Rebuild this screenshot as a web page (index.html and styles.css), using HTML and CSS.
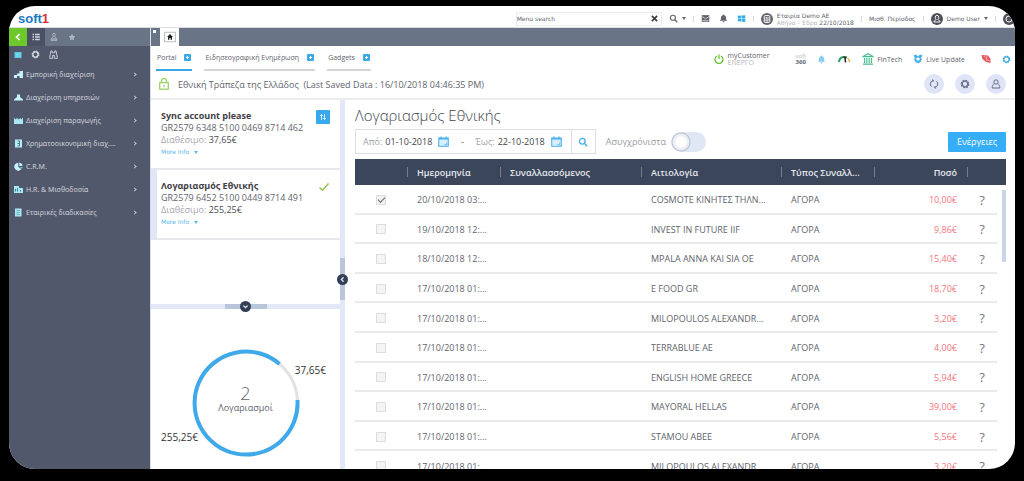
FILE: index.html
```html
<!DOCTYPE html>
<html lang="el">
<head>
<meta charset="utf-8">
<meta name="viewport" content="width=device-width, initial-scale=1">
<title>Soft1 Portal</title>
<link rel="stylesheet" href="styles.css">
</head>
<body>
<svg class="sprite" aria-hidden="true">
  <symbol id="i-search" viewBox="0 0 12 12"><circle cx="5.2" cy="5" r="3.4" fill="none" stroke="currentColor" stroke-width="1.5"/><path d="M7.7 7.6 11 11" stroke="currentColor" stroke-width="1.7"/></symbol>
  <symbol id="i-bell" viewBox="0 0 12 12"><path d="M6 .8a1 1 0 0 1 1 1C9 2.3 9.4 4 9.4 6c0 1.6.7 2.2 1.6 3H1c.9-.8 1.6-1.400 1.600-3C2.600 4 3 2.300 5 1.800a1 1 0 0 1 1-1zM4.600 9.800h2.800a1.400 1.400 0 0 1-2.800 0z" fill="currentColor"/></symbol>
  <symbol id="i-gear" viewBox="0 0 12 12"><circle cx="6" cy="6" r="4.300" fill="none" stroke="currentColor" stroke-width="1.800" stroke-dasharray="2 1.377"/><circle cx="6" cy="6" r="3.400" fill="none" stroke="currentColor" stroke-width="1.600"/></symbol>
  <symbol id="i-user" viewBox="0 0 12 12"><circle cx="6" cy="3.600" r="2.600" fill="none" stroke="currentColor" stroke-width="1.200"/><path d="M4 5.500C2.300 6.500 1.500 8 1.400 10.800h9.200C10.500 8 9.700 6.500 8 5.500" fill="none" stroke="currentColor" stroke-width="1.200"/></symbol>
  <symbol id="i-cal" viewBox="0 0 12 12"><path d="M.8 2.200h10.400v9H.8z" fill="#d8effc" stroke="currentColor" stroke-width="1.100"/><path d="M.8 3.200h10.400M3.300.5v2.500M8.700.5v2.500" stroke="currentColor" stroke-width="1.300"/><path d="M7 9.400h2.500V7" stroke="currentColor" fill="none" stroke-width=".8"/></symbol>
</svg>
<div class="frame">
  <header class="topbar">
    <a class="logo" href="#" aria-label="soft1">soft<span class="logo-one">1</span></a>
    <div class="top-tools">
      <div class="menu-search">
        <input type="text" class="menu-input" value="Menu search" aria-label="Menu search">
        <button class="bare dark" aria-label="Clear"><svg class="ic6" viewBox="0 0 8 8"><path d="M1 1l6 6M7 1 1 7" stroke="currentColor" stroke-width="1.800"/></svg></button>
      </div>
      <button class="bare find" aria-label="Search"><svg class="ic9"><use href="#i-search"/></svg><svg class="caret" viewBox="0 0 4 3"><path d="M0 0h4L2 3z" fill="currentColor"/></svg></button>
      <span class="sep"></span>
      <div class="notices">
        <button class="bare" aria-label="Messages"><svg class="ic9" viewBox="0 0 12 12"><rect x="1" y="1.500" width="10" height="9" fill="currentColor"/><path d="M1.500 3.500 6 6.500l4.500-3M2 9h8" stroke="#fff" stroke-width=".9" fill="none"/></svg></button>
        <button class="bare" aria-label="Notifications"><svg class="ic9"><use href="#i-bell"/></svg></button>
        <button class="bare cyan" aria-label="Windows"><svg class="ic9" viewBox="0 0 12 12"><path d="M1 2.400 5.500 2v3.700H1zM6.200 2 11 1.500v4.200H6.200zM1 6.400h4.500V10L1 9.600zM6.200 6.400H11v4.200l-4.800-.5z" fill="currentColor"/></svg></button>
      </div>
      <span class="sep"></span>
      <div class="company">
        <svg class="ic12" viewBox="0 0 12 12"><circle cx="6" cy="6" r="6" fill="#62646b"/><rect x="3.200" y="2.600" width="5.600" height="6.800" rx="1" fill="none" stroke="#fff" stroke-width="1"/><path d="M4 4.700h4M4 6.200h4M4 7.700h4M5.300 4v5M6.800 4v5" stroke="#fff" stroke-width=".5"/></svg>
        <div class="company-text"><span>Εταιρία Demo AE</span><span class="muted">Αθήνα - Έδρα <b class="date">22/10/2018</b></span></div>
      </div>
      <span class="sep"></span>
      <a class="period" href="#">Μισθ. Περίοδος</a>
      <span class="sep"></span>
      <a class="account" href="#"><svg class="ic12" viewBox="0 0 12 12"><circle cx="6" cy="6" r="6" fill="#50525c"/><path d="M6 2.300c2.200 0 2.200 3.300.8 4.200.4.700 2.300.7 2.300 2.500H2.900c0-1.800 1.900-1.800 2.300-2.500C3.800 5.600 3.800 2.300 6 2.300z" fill="none" stroke="#fff" stroke-width=".9"/></svg>Demo User<svg class="caret" viewBox="0 0 4 3"><path d="M0 0h4L2 3z" fill="currentColor"/></svg></a>
      <span class="sep"></span>
      <button class="bare" aria-label="Help"><svg class="ic12" viewBox="0 0 12 12"><circle cx="6" cy="6" r="6" fill="#50525c"/><circle cx="6" cy="6" r="3" fill="none" stroke="#fff"/></svg></button>
    </div>
  </header>
  <div class="body">
    <aside class="sidebar">
      <div class="side-modes">
        <button class="mode back" aria-label="Back"><svg class="ic8" viewBox="0 0 8 8"><path d="M5.500 1 2.500 4l3 3" fill="none" stroke="#fff" stroke-width="1.700"/></svg></button>
        <button class="mode current" aria-label="List"><svg class="ic8" viewBox="0 0 8 8"><path d="M.5 1.500h1.500M.5 4h1.500M.5 6.500h1.500M3 1.500h4.800M3 4h4.800M3 6.500h4.800" stroke="#cfd3dc" stroke-width="1.300"/></svg></button>
        <button class="mode" aria-label="Users"><svg class="ic8" viewBox="0 0 8 8"><path d="M4 .3c1.500 0 1.500 2.500.5 3 .5 1 2.500 1.500 2.500 4H1c0-2.500 2-3 2.500-4-1-.5-1-3 .5-3z" fill="none" stroke="#bcc1cc" stroke-width=".9"/><path d="M2 6h4" stroke="#bcc1cc"/></svg></button>
        <button class="mode" aria-label="Favourites"><svg class="ic8" viewBox="0 0 8 8"><path d="m4 .8 1 2 2.300.5L5.700 5 6 7.300 4 6.200 2 7.300 2.300 5 .7 3.300 3 2.800z" fill="#b0b6c2"/></svg></button>
      </div>
      <div class="side-tools">
        <button class="bare" aria-label="Apps"><svg class="ic8" viewBox="0 0 8 8"><rect x=".5" y="1" width="7" height="6" fill="#5ccbe5"/><path d="M1.500 3h5M1.500 5h5" stroke="#8be3f4" stroke-width=".8"/></svg></button>
        <button class="bare pale" aria-label="Settings"><svg class="ic9"><use href="#i-gear"/></svg></button>
        <button class="bare pale" aria-label="Find"><svg class="ic9" viewBox="0 0 10 10"><path d="M2.200 1h1.300v2h3V1h1.300l1.400 7v1.300H6V6H4v3.300H.8V8z" fill="none" stroke="currentColor" stroke-width="1"/></svg></button>
      </div>
      <nav class="menu">
        <a href="#"><svg class="ic9" viewBox="0 0 9 9"><path d="M0 5h3V3.500h2.500V1H9v7H5.500V6H3v2H0z" fill="#c8f2fa"/></svg><span>Εμπορική διαχείριση</span><i class="chev"></i></a>
        <a href="#"><svg class="ic9" viewBox="0 0 9 9"><path d="M3 1.500h3V4l3 2.500v1H0v-1L3 4z" fill="#c8f2fa"/></svg><span>Διαχείριση υπηρεσιών</span><i class="chev"></i></a>
        <a href="#"><svg class="ic9" viewBox="0 0 9 9"><path d="M0 1.500 1.500 3.500 3 2l1.500 1.500L6.500 2l1 1.500L9 1.500V8H0z" fill="#a9e7f3"/></svg><span>Διαχείριση παραγωγής</span><i class="chev"></i></a>
        <a href="#"><svg class="ic9" viewBox="0 0 9 9"><rect x="1" y=".5" width="7" height="8" fill="#b9edf6"/><path d="M3.500 2h2v5h-2M3.500 4.500h2" stroke="#56798a" fill="none"/></svg><span>Χρηματοοικονομική διαχ....</span><i class="chev"></i></a>
        <a href="#"><svg class="ic9" viewBox="0 0 9 9"><path d="M4.300.7v4l3 2.600A4 4 0 1 1 4.300.7z" fill="#c8f2fa"/><path d="M5.300.5a4 4 0 0 1 3.200 3.600H5.300z" fill="#c8f2fa"/><path d="m6 5h2.600c0 .8-.3 1.400-.7 1.900z" fill="#5ccbe5"/></svg><span>C.R.M.</span><i class="chev"></i></a>
        <a href="#"><svg class="ic9" viewBox="0 0 9 9"><path d="M0 1h5v2h4v5H0z" fill="#a9e7f3"/><path d="M1.500 6.500V4M3.500 6.500V3M6.500 6.500V5" stroke="#3e7c92"/></svg><span>H.R. &amp; Μισθοδοσία</span><i class="chev"></i></a>
        <a href="#"><svg class="ic9" viewBox="0 0 9 9"><rect x="1" y=".5" width="6.500" height="8" fill="#a9e7f3"/><path d="M2.500 2.500h3.500M2.500 4.500h3.500M2.500 6.500h3.500" stroke="#5a9fb2" stroke-width=".8"/></svg><span>Εταιρικές διαδικασίες</span><i class="chev"></i></a>
      </nav>
    </aside>
    <main class="main">
      <div class="windowbar"><i class="dot"></i><a class="home" href="#" aria-label="Home"><svg class="ic12" viewBox="0 0 12 12"><rect x=".7" y="1.200" width="10.600" height="9.600" fill="#fff" stroke="#a7abb4" stroke-width=".8"/><path d="M6 3 9 6H8v2.800H6.600V7H5.400v1.800H4V6H3z" fill="#222"/></svg></a></div>
      <div class="portal-row">
        <nav class="tabs">
          <a class="tab on" href="#">Portal<i class="plus"></i></a>
          <a class="tab" href="#">Ειδησεογραφική Ενημέρωση<i class="plus"></i></a>
          <a class="tab" href="#">Gadgets<i class="plus"></i></a>
        </nav>
        <div class="apps">
          <a class="customer" href="#"><svg class="ic10" viewBox="0 0 10 10"><path d="M3 2a4 4 0 1 0 4 0M5 .5V5" fill="none" stroke="#6dc233" stroke-width="1.300"/></svg><span class="customer-text"><span>myCustomer</span><span class="muted">ΕΝΕΡΓΟ</span></span></a>
          <a class="soft360" href="#"><span class="muted">soft</span><b>360</b></a>
          <a href="#" aria-label="Alerts"><svg class="ic9 sky"><use href="#i-bell"/></svg></a>
          <a href="#" aria-label="Dashboard"><svg class="gauge" viewBox="0 0 14 10"><path d="M2 8a5.500 5.500 0 0 1 4-5" fill="none" stroke="#27a567" stroke-width="2"/><path d="M6 3a5.500 5.500 0 0 1 3.800.6" fill="none" stroke="#35674f" stroke-width="2"/><path d="M10.500 4A5.500 5.500 0 0 1 12.500 8" fill="none" stroke="#d8bb68" stroke-width="1.600"/><path d="M8.500 8.500 8 3" stroke="#222" stroke-width="1.500"/></svg></a>
          <a class="app-link" href="#"><svg class="ic12" viewBox="0 0 12 12"><path d="M.5 3.700 6 .7l5.500 3zM1 11.200h10" fill="none" stroke="#45bd91" stroke-width="1.200"/><path d="M2.500 5v5M4.800 5v5M7.200 5v5M9.500 5v5" stroke="#45bd91" stroke-width="1.200"/></svg>FinTech</a>
          <a class="app-link live" href="#"><svg class="ic10" viewBox="0 0 10 10"><path d="M.5 1.500 3 .5l2 2 2-2 2.500 1L8 4l1 1.500-1.500 2.500L5 9.500 2.500 8 1 5.500 2 4z" fill="#46b1ea"/><path d="M5 3.200 7.200 5 5 7 2.800 5z" fill="#fff"/></svg>Live Update</a>
          <a href="#" aria-label="Alert"><svg class="ic10" viewBox="0 0 10 10"><path d="M.5 1 7 1.500 9.500 5v4L5 8 1.500 5z" fill="#e4575b"/><path d="m3 2 5 5M6 2l-1 4 4 1" stroke="#f7c5c5" stroke-width=".6" fill="none"/></svg></a>
          <a href="#" aria-label="Settings"><svg class="ic9 azure"><use href="#i-gear"/></svg></a>
        </div>
      </div>
      <div class="bank-row">
        <svg class="lock" viewBox="0 0 10 12"><rect x=".7" y="4.700" width="8.600" height="6.500" fill="none" stroke="#93cf5b" stroke-width="1.200"/><path d="M2.500 4.500V3a2.500 2.500 0 0 1 5 0v1.500M5 7v2.200" fill="none" stroke="#93cf5b" stroke-width="1.200"/></svg>
        <h1 class="bank">Εθνική Τράπεζα της Ελλάδος&nbsp; (Last Saved Data : 16/10/2018 04:46:35 PM)</h1>
        <div class="round-tools">
          <button class="round" aria-label="Refresh"><svg class="ic10" viewBox="0 0 12 12"><path d="M3 9.200A4.300 4.300 0 0 1 5 1.800M9 2.800a4.300 4.300 0 0 1-2 7.400M3.800.8 5.500 1.800 4.500 3.500M8.200 11.200 6.500 10.200 7.500 8.500" fill="none" stroke="currentColor" stroke-width="1.200"/></svg></button>
          <button class="round" aria-label="Settings"><svg class="ic10"><use href="#i-gear"/></svg></button>
          <button class="round" aria-label="Profile"><svg class="ic10"><use href="#i-user"/></svg></button>
        </div>
      </div>
      <div class="workspace">
        <section class="accounts">
          <div class="account-list">
            <article class="card">
              <div><h2>Sync account please</h2><p>GR2579 6348 5100 0469 8714 462</p><p><span class="label">Διαθέσιμο:</span> <span class="strong">37,65€</span></p><a class="more" href="#">More Info<svg class="caret" viewBox="0 0 4 3"><path d="M0 0h4L2 3z" fill="currentColor"/></svg></a></div>
              <button class="sync" aria-label="Sync"><svg class="ic8" viewBox="0 0 8 8"><path d="M2.500 7V1.500M1 3l1.500-1.500L4 3M5.500 1v5.500M4 5l1.500 1.500L7 5" fill="none" stroke="#fff" stroke-width=".8"/></svg></button>
            </article>
            <article class="card chosen">
              <div><h2>Λογαριασμός Εθνικής</h2><p>GR2579 6452 5100 0449 8714 491</p><p><span class="label">Διαθέσιμο:</span> <span class="strong">255,25€</span></p><a class="more" href="#">More Info<svg class="caret" viewBox="0 0 4 3"><path d="M0 0h4L2 3z" fill="currentColor"/></svg></a></div>
              <svg class="tick" viewBox="0 0 12 10"><path d="M1.500 5.500 4.500 8.300 10.500 1.500" fill="none" stroke="#8fc34a" stroke-width="1.400"/></svg>
            </article>
          </div>
          <div class="split-h"><span class="grip-h"><button class="knob" aria-label="Collapse"><svg class="ic6" viewBox="0 0 8 8"><path d="m1.500 3 2.500 2.200L6.500 3" fill="none" stroke="#dde3ee" stroke-width="1.500"/></svg></button></span></div>
          <figure class="donut">
            <svg class="ring" viewBox="0 0 110 110" role="img" aria-label="37,65€ / 255,25€"><circle cx="55" cy="55" r="51.500" fill="none" stroke="#e3e1e3" stroke-width="3"/><path d="M106.500 52A51.500 51.500 0 1 1 88.500 15.900" fill="none" stroke="#40a9ea" stroke-width="4"/></svg>
            <figcaption class="donut-text"><span class="count">2</span><span>Λογαριασμοί</span></figcaption>
            <span class="slice small-slice">37,65€</span>
            <span class="slice large-slice">255,25€</span>
          </figure>
        </section>
        <div class="split-v"><span class="grip-v"><button class="knob" aria-label="Collapse"><svg class="ic6" viewBox="0 0 8 8"><path d="M5.200 1.500 2.800 4l2.400 2.500" fill="none" stroke="#dde3ee" stroke-width="1.500"/></svg></button></span></div>
        <section class="ledger">
          <h2 class="ledger-title">Λογαριασμός Εθνικής</h2>
          <div class="filters">
            <div class="range">
              <label class="date-field"><span>Από:</span><input type="text" value="01-10-2018"></label><svg class="cal azure"><use href="#i-cal"/></svg>
              <span class="dash">-</span>
              <label class="date-field"><span>Έως:</span><input type="text" value="22-10-2018"></label><svg class="cal azure"><use href="#i-cal"/></svg>
              <button class="range-go" aria-label="Search"><svg class="ic10"><use href="#i-search"/></svg></button>
            </div>
            <label class="unsynced">Ασυγχρόνιστα<input type="checkbox" class="switch"></label>
            <button class="actions">Ενέργειες</button>
          </div>
          <div class="grid">
            <table>
              <colgroup><col class="c-check"><col class="c-std"><col class="c-party"><col><col class="c-std"><col class="c-std"><col class="c-help"><col class="c-gutter"></colgroup>
              <thead><tr><th></th><th>Ημερομηνία</th><th>Συναλλασσόμενος</th><th>Αιτιολογία</th><th>Τύπος Συναλλ...</th><th class="num">Ποσό</th><th></th><th></th></tr></thead>
              <tbody>
                <tr><td><input type="checkbox" aria-label="COSMOTE" checked></td><td>20/10/2018 03:...</td><td></td><td>COSMOTE ΚΙΝΗΤΕΣ ΤΗΛΝ...</td><td>ΑΓΟΡΑ</td><td class="num">10,00€</td><td class="q">?</td><td></td></tr>
                <tr><td><input type="checkbox" aria-label="INVEST IN FUTURE"></td><td>19/10/2018 12:...</td><td></td><td>INVEST IN FUTURE IIF</td><td>ΑΓΟΡΑ</td><td class="num">9,86€</td><td class="q">?</td><td></td></tr>
                <tr><td><input type="checkbox" aria-label="MPALA ANNA"></td><td>18/10/2018 12:...</td><td></td><td>MPALA ANNA KAI SIA OE</td><td>ΑΓΟΡΑ</td><td class="num">15,40€</td><td class="q">?</td><td></td></tr>
                <tr><td><input type="checkbox" aria-label="E FOOD"></td><td>17/10/2018 01:...</td><td></td><td>E FOOD GR</td><td>ΑΓΟΡΑ</td><td class="num">18,70€</td><td class="q">?</td><td></td></tr>
                <tr><td><input type="checkbox" aria-label="MILOPOULOS"></td><td>17/10/2018 01:...</td><td></td><td>MILOPOULOS ALEXANDR...</td><td>ΑΓΟΡΑ</td><td class="num">3,20€</td><td class="q">?</td><td></td></tr>
                <tr><td><input type="checkbox" aria-label="TERRABLUE"></td><td>17/10/2018 01:...</td><td></td><td>TERRABLUE AE</td><td>ΑΓΟΡΑ</td><td class="num">4,00€</td><td class="q">?</td><td></td></tr>
                <tr><td><input type="checkbox" aria-label="ENGLISH HOME"></td><td>17/10/2018 01:...</td><td></td><td>ENGLISH HOME GREECE</td><td>ΑΓΟΡΑ</td><td class="num">5,94€</td><td class="q">?</td><td></td></tr>
                <tr><td><input type="checkbox" aria-label="MAYORAL"></td><td>17/10/2018 01:...</td><td></td><td>MAYORAL HELLAS</td><td>ΑΓΟΡΑ</td><td class="num">39,00€</td><td class="q">?</td><td></td></tr>
                <tr><td><input type="checkbox" aria-label="STAMOU"></td><td>17/10/2018 01:...</td><td></td><td>STAMOU ABEE</td><td>ΑΓΟΡΑ</td><td class="num">5,56€</td><td class="q">?</td><td></td></tr>
                <tr><td><input type="checkbox" aria-label="MILOPOULOS"></td><td>17/10/2018 01:...</td><td></td><td>MILOPOULOS ALEXANDR...</td><td>ΑΓΟΡΑ</td><td class="num">3,20€</td><td class="q">?</td><td></td></tr>
              </tbody>
            </table>
            <span class="scroll-thumb"></span>
          </div>
        </section>
      </div>
    </main>
  </div>
</div>
</body>
</html>
```
FILE: styles.css
```css
* { box-sizing: border-box; }
html, body { height: 100%; }
body { margin: 0; padding: 6px 9px 12px; background: #000; font-family: "Open Sans", "Noto Sans", sans-serif; font-size: 9px; color: #62646d; overflow: hidden; }
a { color: inherit; text-decoration: none; }
button, input { font: inherit; color: inherit; margin: 0; padding: 0; }
button { border: 0; background: none; cursor: pointer; }
h1, h2, p, figure { margin: 0; }
svg { display: block; flex: none; }
.sprite { position: absolute; width: 0; height: 0; }
.frame { height: 100%; display: flex; flex-direction: column; border-radius: 26px; overflow: hidden; background: #fff; }
.ic6 { width: 7px; height: 7px; }
.ic8 { width: 8px; height: 8px; }
.ic9 { width: 9px; height: 9px; }
.ic10 { width: 10px; height: 10px; }
.ic12 { width: 12px; height: 12px; }
.cal { width: 11px; height: 11px; }
.caret { width: 4px; height: 3px; }
.muted { color: #b5b6ba; }
.dark { color: #3a3a3c; }
.pale { color: #d5d8df; }
.cyan { color: #35aee6; }
.sky { color: #87cdf4; }
.azure { color: #42aeea; }

.topbar { flex: none; height: 22px; display: flex; align-items: center; justify-content: space-between; padding-left: 9px; border-bottom: 1px solid #dadde2; font-family: "DejaVu Sans", sans-serif; font-size: 6px; }
.logo { font: bold 13px/20px "Liberation Sans", sans-serif; color: #1b78c2; padding-top: 4px; }
.logo-one { color: #e02c3c; }
.top-tools { display: flex; align-items: center; gap: 7px; height: 100%; padding-top: 4px; }
.menu-search { display: flex; align-items: center; width: 146px; height: 14px; border: 1px solid #ececee; padding-right: 3px; }
.menu-input { flex: 1; min-width: 0; border: 0; background: none; outline: 0; }
.find { display: flex; align-items: center; gap: 4px; }
.notices { display: flex; gap: 9px; }
.sep { width: 1px; height: 6px; background: #dcdce0; }
.company, .account { display: flex; align-items: center; gap: 4px; }
.company-text, .customer-text { display: flex; flex-direction: column; line-height: 7px; }
.date { font-weight: normal; color: #62646d; }

.body { flex: 1; min-height: 0; display: flex; }
.sidebar { flex: none; width: 141px; background: #52586c; color: #cdd0d8; font-family: "Noto Sans", sans-serif; font-size: 7px; }
.side-modes { display: flex; height: 18px; background: #697487; }
.mode { width: 18px; display: grid; place-items: center; }
.back { background: #6cc82b; }
.current { background: #4b5164; }
.side-tools { display: flex; align-items: center; gap: 9px; height: 17px; padding-left: 5px; }
.menu a { display: flex; align-items: center; height: 23px; gap: 3px; padding: 0 14px 0 5px; white-space: nowrap; }
.menu span { flex: 1; }
.chev { width: 3px; height: 3px; border: solid #c4c8d1; border-width: 1px 1px 0 0; transform: rotate(45deg); }

.main { flex: 1; min-width: 0; display: flex; flex-direction: column; border-left: 1px solid #d9deea; }
.windowbar { flex: none; display: flex; height: 18px; background: #697487; }
.dot { width: 3px; height: 3px; margin: 2px 4px 0 2px; background: #fff; }
.home { display: grid; place-items: center; width: 19px; height: 18px; background: #fff; }
.portal-row { flex: none; display: flex; justify-content: space-between; height: 26px; padding-left: 5px; font-size: 7px; }
.tabs { display: flex; gap: 12px; }
.tab { display: flex; align-items: center; gap: 8px; height: 25px; padding: 0 1px; border-bottom: 2px solid #d5d6da; }
.on { border-color: #38a7e9; }
.plus { width: 7px; height: 7px; border-radius: 1px; background: linear-gradient(#fff, #fff) center/3px 1px no-repeat, linear-gradient(#fff, #fff) center/1px 3px no-repeat, #39a9e8; }
.apps { display: flex; align-items: center; gap: 11px; padding-right: 4px; }
.customer, .app-link { display: flex; align-items: center; gap: 3px; }
.customer { gap: 4px; padding-right: 15px; }
.live { padding-right: 5px; }
.soft360 { display: flex; flex-direction: column; line-height: 6px; font-size: 6px; }
.gauge { width: 14px; height: 10px; }

.bank-row { flex: none; display: flex; align-items: center; height: 28px; padding: 0 9px 2px 8px; border-bottom: 2px solid #ebecef; }
.lock { width: 10px; height: 12px; }
.bank { flex: 1; padding-left: 9px; font-size: 9px; font-weight: normal; }
.round-tools { display: flex; gap: 11px; }
.round { width: 20px; height: 20px; border-radius: 50%; background: #dfe5f6; color: #667088; display: grid; place-items: center; }

.workspace { flex: 1; min-height: 0; display: flex; }
.accounts { flex: none; width: 189px; display: flex; flex-direction: column; }
.account-list { flex: none; height: 204px; }
.card { display: flex; justify-content: space-between; height: 70px; padding: 10px 10px 0; border-bottom: 2px solid #e6e8ee; line-height: 12px; }
.chosen { border-left: 6px solid #e0e6f6; padding-left: 4px; }
.card h2 { font-size: 9px; line-height: 12px; color: #3f4046; }
.label { color: #a7a8ae; }
.strong { color: #4b4c53; }
.more { display: flex; align-items: center; gap: 5px; color: #60b5ec; font-family: "DejaVu Sans", sans-serif; font-size: 6px; }
.sync { width: 14px; height: 14px; background: #37aaed; border-radius: 1px; display: grid; place-items: center; }
.tick { width: 12px; height: 10px; margin-top: 2px; }
.split-h { flex: none; height: 5px; background: #e2e8f6; display: flex; justify-content: center; }
.split-v { flex: none; width: 5px; background: #e2e8f6; padding-top: 158px; }
.grip-h { width: 42px; height: 5px; background: #b9c5da; display: grid; place-content: center; }
.grip-v { display: grid; height: 42px; width: 5px; background: #b9c5da; place-content: center; }
.knob { width: 11px; height: 11px; border-radius: 50%; background: #343f55; display: grid; place-items: center; }
.donut { position: relative; flex: 1; min-height: 0; padding-top: 39px; display: flex; justify-content: center; }
.ring { width: 110px; height: 110px; }
.donut-text { position: absolute; top: 74px; left: 0; right: 0; display: flex; flex-direction: column; align-items: center; line-height: 10px; font-size: 9px; }
.count { font-size: 18px; line-height: 20px; font-weight: 300; }
.slice { position: absolute; color: #333; font-size: 10px; line-height: 14px; }
.small-slice { right: 14px; top: 54px; }
.large-slice { left: 10px; top: 121px; }

.ledger { flex: 1; min-width: 0; padding: 4px 9px 0 10px; }
.ledger-title { font-size: 15px; line-height: 22px; font-weight: 300; color: #44464d; }
.filters { display: flex; align-items: center; height: 25px; margin: 3px 0 5px; }
.range { display: flex; align-items: center; height: 25px; border: 1px solid #dcdde0; padding-left: 7px; }
.date-field { display: flex; gap: 3px; color: #a0a1a8; }
.date-field input { width: 48px; border: 0; background: none; color: #44464d; outline: 0; margin-right: 5px; }
.dash { width: 26px; text-align: center; }
.range-go { width: 24px; height: 100%; margin-left: 9px; border-left: 1px solid #dcdde0; display: grid; place-items: center; color: #42aeea; }
.unsynced { display: flex; align-items: center; gap: 5px; margin-left: 10px; color: #9a9ba2; }
.switch { appearance: none; width: 35px; height: 20px; border-radius: 10px; background: radial-gradient(circle at 10px 10px, #fff 4px, #e6e9ee 8px, #b9c0cc 9px, transparent 10px), #dfe6f4; }
.actions { margin-left: auto; width: 58px; height: 20px; border-radius: 1px; background: #36adf7; color: #fff; }
.grid { position: relative; }
table { width: 100%; height: 322px; table-layout: fixed; border-collapse: separate; border-spacing: 0; }
.c-check { width: 52px; }
.c-std { width: 93px; }
.c-party { width: 141px; }
.c-help { width: 30px; }
.c-gutter { width: 9px; }
th { height: 26px; padding: 0 0 0 10px; background: linear-gradient(#747d90, #747d90) left center/1px 10px no-repeat, #3b465b; color: #e6e9ef; text-align: left; font-weight: 600; white-space: nowrap; }
th:first-child, th:last-child { background: #3b465b; }
td { padding: 2px 0 0 10px; border-bottom: 2px solid #e9eaec; white-space: nowrap; }
td:first-child { padding: 2px 0 0; }
td:last-child { border: 0; padding: 0; }
.num { text-align: right; padding-left: 0; padding-right: 10px; }
td.num { color: #f2767d; }
td.q { padding: 2px 0 0; text-align: center; font-size: 13px; line-height: 14px; color: #777980; }
td input { appearance: none; display: block; width: 10px; height: 10px; margin: 0 auto; border: 1px solid #dcdde0; background: #f4f4f5; }
td input:checked { position: relative; }
td input:checked::after { content: ""; position: absolute; left: 1px; top: 1px; width: 6px; height: 3px; border: solid #66686f; border-width: 0 0 1px 1px; transform: rotate(-45deg); }
.scroll-thumb { position: absolute; right: 0; top: 31px; width: 4px; height: 72px; background: #c9d6ea; }
```
